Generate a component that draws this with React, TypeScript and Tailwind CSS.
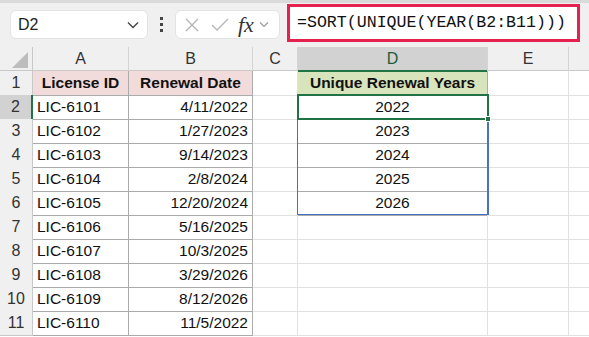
import React from 'react';

const rows = [
  ['LIC-6101', '4/11/2022', '2022'],
  ['LIC-6102', '1/27/2023', '2023'],
  ['LIC-6103', '9/14/2023', '2024'],
  ['LIC-6104', '2/8/2024', '2025'],
  ['LIC-6105', '12/20/2024', '2026'],
  ['LIC-6106', '5/16/2025', ''],
  ['LIC-6107', '10/3/2025', ''],
  ['LIC-6108', '3/29/2026', ''],
  ['LIC-6109', '8/12/2026', ''],
  ['LIC-6110', '11/5/2022', ''],
];

const cols = 'grid grid-cols-[33px_96px_124px_45px_190px_81px_1fr]';

function FormulaBar() {
  return (
    <div className="h-[47px] bg-[#f0f0f0] relative">
      <div className="h-[3px] bg-[#dadada]" />
      <div className="flex items-start">
        <div className="ml-[10px] mt-[7px] w-[138px] h-[29px] bg-white rounded-md border border-[#e3e3e3] flex items-center justify-between pl-[7px] pr-[8px]">
          <span className="text-[16px] text-[#222]">D2</span>
          <svg width="12" height="8" viewBox="0 0 12 8">
            <path d="M1 1.5 L6 6.5 L11 1.5" fill="none" stroke="#444" strokeWidth="1.4" />
          </svg>
        </div>
        <div className="w-[27px] mt-[7px] h-[29px] flex flex-col items-center justify-center gap-[3px]">
          <span className="w-[3px] h-[3px] bg-[#444]" />
          <span className="w-[3px] h-[3px] bg-[#444]" />
          <span className="w-[3px] h-[3px] bg-[#444]" />
        </div>
        <div className="mt-[7px] w-[105px] h-[29px] bg-white rounded-md border border-[#e3e3e3] flex items-center pl-[8px]">
          <svg width="16" height="16" viewBox="0 0 16 16">
            <path d="M2 2 L14 14 M14 2 L2 14" stroke="#b4b4b4" strokeWidth="1.3" />
          </svg>
          <svg width="20" height="16" viewBox="0 0 20 16" className="ml-[10px]">
            <path d="M2 8 L7 13 L18 2" fill="none" stroke="#b4b4b4" strokeWidth="1.3" />
          </svg>
          <span className="ml-[8px] text-[22px] italic text-[#333] leading-none" style={{ fontFamily: '"Liberation Serif", serif' }}>fx</span>
          <svg width="10" height="7" viewBox="0 0 10 7" className="ml-[5px]">
            <path d="M1 1.5 L5 5.5 L9 1.5" fill="none" stroke="#999" strokeWidth="1.2" />
          </svg>
        </div>
        <div className="ml-[7px] mt-[1px] w-[293px] h-[38px] bg-white border-[3px] border-[#e5224f] flex items-center pl-[7px]">
          <span className="text-[16.6px] text-[#111]" style={{ fontFamily: '"Liberation Mono", monospace' }}>
            =SORT(UNIQUE(YEAR(B2:B11)))
          </span>
        </div>
      </div>
    </div>
  );
}

export default function App() {
  const gray = 'border-[#ababab]';
  const grid = 'border-[#e1e1e1]';
  return (
    <div className="w-[589px] h-[337px] overflow-hidden bg-white relative" style={{ fontFamily: '"Liberation Sans", Arial, sans-serif' }}>
      <FormulaBar />
      <div className={`${cols} h-[24px] bg-[#f0f0f0] text-[16px] text-[#333] border-b border-[#c9c9c9]`}>
        <div className="relative border-r border-[#c9c9c9]">
          <svg width="18" height="18" viewBox="0 0 18 18" className="absolute right-[3px] bottom-[2px]">
            <path d="M17 1 L17 17 L1 17 Z" fill="#bdbdbd" />
          </svg>
        </div>
        <div className="flex items-center justify-center border-r border-[#d4d4d4]">A</div>
        <div className="flex items-center justify-center border-r border-[#d4d4d4]">B</div>
        <div className="flex items-center justify-center border-r border-[#d4d4d4]">C</div>
        <div className="flex items-center justify-center bg-[#d2d2d2] border-r border-[#d4d4d4] text-[#1d5c3c] relative">
          D
          <div className="absolute left-0 right-0 bottom-[-1px] h-[2px] bg-[#217346]" />
        </div>
        <div className="flex items-center justify-center border-r border-[#d4d4d4]">E</div>
        <div />
      </div>
      <div className={`${cols} h-[24px] text-[15.5px] text-[#111]`}>
        <div className="flex items-center justify-center bg-[#f0f0f0] border-r border-b border-[#c9c9c9] text-[#333] text-[16px]">1</div>
        <div className={`flex items-center justify-center font-bold bg-[#f2dcdb] border-r border-b ${gray}`}>License ID</div>
        <div className={`flex items-center justify-center font-bold bg-[#f2dcdb] border-r border-b ${gray}`}>Renewal Date</div>
        <div className={`border-r border-b ${grid}`} />
        <div className={`flex items-center justify-center font-bold bg-[#d8e4bc] border-r border-b ${gray}`}>Unique Renewal Years</div>
        <div className={`border-r border-b ${grid}`} />
        <div className={`border-b ${grid}`} />
      </div>
      {rows.map((r, i) => (
        <div key={i} className={`${cols} h-[24px] text-[15.5px] text-[#111]`}>
          <div
            className={`flex items-center justify-center border-b border-[#c9c9c9] text-[16px] ${
              i === 0 ? 'bg-[#d2d2d2] border-r-2 border-r-[#217346]' : 'bg-[#f0f0f0] border-r border-r-[#c9c9c9]'
            } text-[#333]`}
          >
            {i + 2}
          </div>
          <div className={`flex items-center pl-[4px] border-r border-b ${gray}`}>{r[0]}</div>
          <div className={`flex items-center justify-end pr-[4px] border-r border-b ${gray}`}>{r[1]}</div>
          <div className={`border-r border-b ${i < 5 ? 'border-r-transparent' : ''} ${grid}`} />
          <div className={`flex items-center justify-center border-b ${i < 5 ? `${gray} border-r border-r-[#4472c4]` : `${grid} border-r`}`}>{r[2]}</div>
          <div className={`border-r border-b ${grid}`} />
          <div className={`border-b ${grid}`} />
        </div>
      ))}
      {/* spill range outline */}
      <div className="absolute left-[297px] top-[94px] w-[192px] h-[121px] border border-[#4472c4] pointer-events-none" />
      {/* active cell */}
      <div className="absolute left-[297px] top-[94px] w-[192px] h-[26px] border-2 border-[#217346] pointer-events-none" />
      <div className="absolute left-[485px] top-[116px] w-[6px] h-[6px] bg-[#217346] border border-white" />
    </div>
  );
}
